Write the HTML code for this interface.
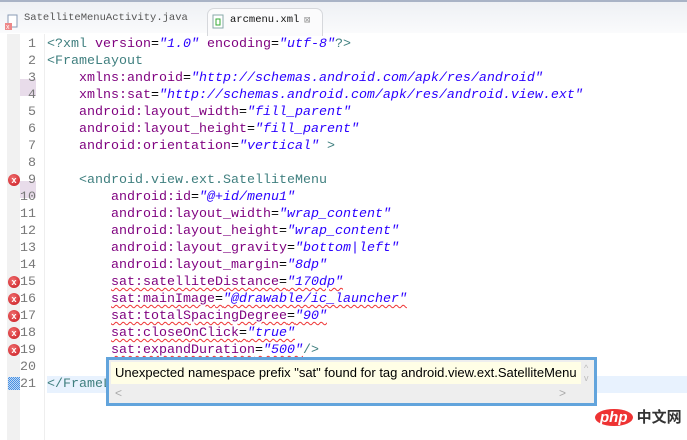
<!DOCTYPE html>
<html><head><meta charset="utf-8"><style>
body{margin:0;width:687px;height:440px;overflow:hidden;background:#fff;position:relative;font-family:"Liberation Mono",monospace}
.top{position:absolute;left:0;top:0;width:687px;height:2px;background:#a9b3c6}
.bar{position:absolute;left:0;top:2px;width:687px;height:31px;background:linear-gradient(#eef0f4,#fafbfc)}
.tab1{position:absolute;left:24px;top:12px;font-size:10.5px;color:#555}
.tab2{position:absolute;left:207px;top:8px;width:114px;height:27px;background:#fbfbfc;border:1px solid #d6d8dc;border-bottom:none;border-radius:7px 7px 0 0}
.tab2 span{position:absolute;left:22px;top:5px;font-size:10.5px;color:#111}
.gut{position:absolute;left:7px;top:34px;width:13px;height:406px;background:#f1f1f1}
.sep{position:absolute;left:44px;top:34px;width:1px;height:406px;background:#eee}
.ln{position:absolute;left:20px;width:16px;text-align:right;font-size:13.33px;color:#787878;line-height:17px}
.code{position:absolute;left:47px;font-size:13.33px;line-height:17px;white-space:pre;color:#000}
.t{color:#3f7f7f}.a{color:#7f007f}.v{color:#2a00ff;font-style:italic}
.u{text-decoration:underline wavy #e33;text-decoration-thickness:1px;text-underline-offset:2px}
.err{position:absolute;left:8px;width:12px;height:12px;border-radius:50%;background:radial-gradient(circle at 40% 35%,#f07070,#c8161d);color:#fff;font:bold 9px "Liberation Sans",sans-serif;text-align:center;line-height:12px}
.tip{position:absolute;left:106px;top:357px;width:485px;height:43px;border:3px solid #62a4dc;background:#eee}
.tip .y{position:absolute;left:2px;top:2px;width:470px;height:22px;background:#fffee6;font:13px "Liberation Sans",sans-serif;line-height:22px;padding-left:4px;color:#000;box-sizing:border-box}
</style></head><body>
<div class="top"></div><div class="bar"></div>
<svg style="position:absolute;left:5px;top:14px" width="14" height="18"><rect x="3" y="1" width="9" height="12" fill="#fff" stroke="#8a9bb5"/><rect x="0" y="9" width="7" height="7" fill="#e88"/><text x="1" y="15" font-size="7" fill="#fff" font-family="Liberation Sans">x</text></svg>
<div class="tab1">SatelliteMenuActivity.java</div>
<div class="tab2"><svg style="position:absolute;left:4px;top:5px" width="12" height="15"><rect x="1" y="1" width="10" height="13" fill="#fff" stroke="#8aa"/><path d="M4 5h4v6h-4z" fill="none" stroke="#3a3"/></svg><span>arcmenu.xml</span><span style="left:96px;color:#999">⊠</span></div>
<div class="gut"></div><div class="sep"></div>
<div style="position:absolute;left:20px;top:79px;width:16px;height:17px;background:#e8dcea"></div>
<div style="position:absolute;left:20px;top:181px;width:16px;height:17px;background:#e8dcea"></div>
<div style="position:absolute;left:8px;top:377px;width:12px;height:13px;background:repeating-conic-gradient(#4a90e2 0 25%,#bcd8f5 0 50%) 0 0/2px 2px"></div>
<div style="position:absolute;left:47px;top:376px;width:640px;height:17px;background:#e8f2fe"></div>
<div class="ln" style="top:36px">1<br>2<br>3<br>4<br>5<br>6<br>7<br>8<br>9<br>10<br>11<br>12<br>13<br>14<br>15<br>16<br>17<br>18<br>19<br>20<br>21</div>
<div class="err" style="top:174px">x</div>
<div class="err" style="top:276px">x</div><div class="err" style="top:293px">x</div><div class="err" style="top:310px">x</div><div class="err" style="top:327px">x</div><div class="err" style="top:344px">x</div>
<div class="code" style="top:36px"><span class="t">&lt;?xml</span> <span class="a">version</span>=<span class="v">"1.0"</span> <span class="a">encoding</span>=<span class="v">"utf-8"</span><span class="t">?&gt;</span>
<span class="t">&lt;FrameLayout</span>
    <span class="a">xmlns:android</span>=<span class="v">"http://schemas.android.com/apk/res/android"</span>
    <span class="a">xmlns:sat</span>=<span class="v">"http://schemas.android.com/apk/res/android.view.ext"</span>
    <span class="a">android:layout_width</span>=<span class="v">"fill_parent"</span>
    <span class="a">android:layout_height</span>=<span class="v">"fill_parent"</span>
    <span class="a">android:orientation</span>=<span class="v">"vertical"</span> <span class="t">&gt;</span>

    <span class="t">&lt;android.view.ext.SatelliteMenu</span>
        <span class="a">android:id</span>=<span class="v">"@+id/menu1"</span>
        <span class="a">android:layout_width</span>=<span class="v">"wrap_content"</span>
        <span class="a">android:layout_height</span>=<span class="v">"wrap_content"</span>
        <span class="a">android:layout_gravity</span>=<span class="v">"bottom|left"</span>
        <span class="a">android:layout_margin</span>=<span class="v">"8dp"</span>
        <span class="u"><span class="a">sat:satelliteDistance</span>=<span class="v">"170dp"</span></span>
        <span class="u"><span class="a">sat:mainImage</span>=<span class="v">"@drawable/ic_launcher"</span></span>
        <span class="u"><span class="a">sat:totalSpacingDegree</span>=<span class="v">"90"</span></span>
        <span class="u"><span class="a">sat:closeOnClick</span>=<span class="v">"true"</span></span>
        <span class="u"><span class="a">sat:expandDuration</span>=<span class="v">"500"</span></span><span class="t">/&gt;</span>

<span class="t">&lt;/FrameLayout&gt;</span></div>
<div class="tip"><div class="y">Unexpected namespace prefix "sat" found for tag android.view.ext.SatelliteMenu</div>
<div style="position:absolute;left:6px;top:26px;color:#aaa;font:12px 'Liberation Sans'">&lt;</div>
<div style="position:absolute;left:450px;top:26px;color:#aaa;font:12px 'Liberation Sans'">&gt;</div>
<div style="position:absolute;left:475px;top:3px;color:#bbb;font:9px 'Liberation Sans';line-height:10px">^<br>v</div></div>
<div style="position:absolute;left:595px;top:406px;font:bold 15px 'Liberation Sans',sans-serif"><span style="background:#e33;color:#fff;border-radius:50%;padding:0 5px;font-style:italic">php</span> <span style="color:#333;font-family:'Noto Sans CJK SC',sans-serif">中文网</span></div>
</body></html>
